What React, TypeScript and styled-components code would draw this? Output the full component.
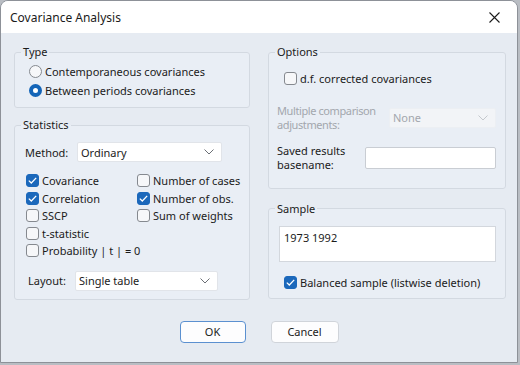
import styled, { createGlobalStyle } from 'styled-components';

const GlobalStyle = createGlobalStyle`
  html, body {
    margin: 0;
    padding: 0;
    background: #b9bdc3;
  }
  body {
    font-family: 'Noto Sans', 'Open Sans', sans-serif;
    font-size: 11px;
    color: #1b1b1b;
  }
`;

function Chevron({ disabled }: { disabled?: boolean }) {
  return (
    <svg width="10" height="6" viewBox="0 0 10 6">
      <path
        d="M0.5 0.5 L5 5 L9.5 0.5"
        fill="none"
        stroke={disabled ? '#c4c8cd' : '#6b6f75'}
        strokeWidth="1"
      />
    </svg>
  );
}

function Check({ checked, label }: { checked?: boolean; label: string }) {
  return (
    <CheckRow>
      <Box $checked={checked}>
        {checked && (
          <svg width="9" height="7" viewBox="0 0 9 7">
            <path d="M0.8 3.6 L3.3 6 L8.2 0.9" fill="none" stroke="#fff" strokeWidth="1.3" />
          </svg>
        )}
      </Box>
      <span>{label}</span>
    </CheckRow>
  );
}

function Radio({ checked, label }: { checked?: boolean; label: string }) {
  return (
    <RadioRow>
      <Circle $checked={checked} />
      <span>{label}</span>
    </RadioRow>
  );
}

export default function App() {
  return (
    <>
      <GlobalStyle />
      <Window>
        <TitleBar>
          <Title>Covariance Analysis</Title>
          <Close>
            <svg width="11" height="11" viewBox="0 0 11 11">
              <path d="M0.5 0.5 L10.5 10.5 M10.5 0.5 L0.5 10.5" stroke="#1b1b1b" strokeWidth="1.1" />
            </svg>
          </Close>
        </TitleBar>

        <Body>
          <Column>
            <Group>
              <Legend>Type</Legend>
              <TypeContent>
                <Radio label="Contemporaneous covariances" />
                <Radio checked label="Between periods covariances" />
              </TypeContent>
            </Group>

            <Group>
              <Legend>Statistics</Legend>
              <StatsContent>
                <FieldRow $indent={10}>
                  <FieldLabel $width={52}>Method:</FieldLabel>
                  <Combo $width={145}>
                    <span>Ordinary</span>
                    <Chevron />
                  </Combo>
                </FieldRow>

                <CheckGrid>
                  <Check checked label="Covariance" />
                  <Check label="Number of cases" />
                  <Check checked label="Correlation" />
                  <Check checked label="Number of obs." />
                  <Check label="SSCP" />
                  <Check label="Sum of weights" />
                  <Check label="t-statistic" />
                  <span />
                  <Check label="Probability | t | = 0" />
                </CheckGrid>

                <FieldRow $indent={13} $top={11}>
                  <FieldLabel $width={47}>Layout:</FieldLabel>
                  <Combo $width={143}>
                    <span>Single table</span>
                    <Chevron />
                  </Combo>
                </FieldRow>
              </StatsContent>
            </Group>
          </Column>

          <Column>
            <Group>
              <Legend>Options</Legend>
              <OptionsContent>
                <Indent>
                  <Check label="d.f. corrected covariances" />
                </Indent>

                <SplitRow $top={16}>
                  <TwoLine $disabled>
                    Multiple comparison
                    <br />
                    adjustments:
                  </TwoLine>
                  <Combo $width={107} $disabled>
                    <span>None</span>
                    <Chevron disabled />
                  </Combo>
                </SplitRow>

                <SplitRow $top={12}>
                  <TwoLine>
                    Saved results
                    <br />
                    basename:
                  </TwoLine>
                  <TextBox />
                </SplitRow>
              </OptionsContent>
            </Group>

            <Group>
              <Legend>Sample</Legend>
              <SampleContent>
                <SampleBox>1973 1992</SampleBox>
                <Indent $left={5}>
                  <Check checked label="Balanced sample (listwise deletion)" />
                </Indent>
              </SampleContent>
            </Group>
          </Column>
        </Body>

        <Footer>
          <Button $primary>OK</Button>
          <Button $width={68}>Cancel</Button>
        </Footer>
      </Window>
    </>
  );
}

const Window = styled.div`
  width: 516px;
  height: 361px;
  border: 1px solid #8d9198;
  border-radius: 8px 8px 0 0;
  background: #e6ebf2;
  overflow: hidden;
  display: flex;
  flex-direction: column;
`;

const TitleBar = styled.div`
  height: 32px;
  background: #ffffff;
  display: flex;
  align-items: center;
  justify-content: space-between;
  padding: 0 17px 0 9px;
`;

const Title = styled.span`
  font-size: 12px;
`;

const Close = styled.span`
  display: flex;
`;

const Body = styled.div`
  display: grid;
  grid-template-columns: 236px 238px;
  column-gap: 18px;
  padding: 11px 0 0 13px;
  align-items: start;
`;

const Column = styled.div`
  display: flex;
  flex-direction: column;
  gap: 9px;

  & + & {
    gap: 12px;
  }
`;

const Group = styled.fieldset`
  margin: 0;
  padding: 0;
  min-width: 0;
  border: 1px solid #d3d9e1;
  border-radius: 3px;
  background: #e9eef5;
`;

const Legend = styled.legend`
  margin-left: 6px;
  padding: 0 2px;
  line-height: 16px;
`;

const TypeContent = styled.div`
  padding: 2px 0 7px 14px;
`;

const RadioRow = styled.div`
  height: 19px;
  display: flex;
  align-items: center;
  gap: 3px;
`;

const Circle = styled.span<{ $checked?: boolean }>`
  box-sizing: border-box;
  flex-shrink: 0;
  width: 13px;
  height: 13px;
  border-radius: 50%;
  border: ${(p) => (p.$checked ? '4px solid #1465b8' : '1px solid #85898f')};
  background: ${(p) => (p.$checked ? '#ffffff' : '#f6f7f9')};
`;

const StatsContent = styled.div`
  padding: 9px 0 8px 0;
`;

const FieldRow = styled.div<{ $indent: number; $top?: number }>`
  display: flex;
  align-items: center;
  padding-left: ${(p) => p.$indent}px;
  margin-top: ${(p) => p.$top ?? 0}px;
`;

const FieldLabel = styled.span<{ $width: number }>`
  width: ${(p) => p.$width}px;
`;

const Combo = styled.div<{ $width: number; $disabled?: boolean }>`
  box-sizing: border-box;
  flex-shrink: 0;
  width: ${(p) => p.$width}px;
  height: 20px;
  display: flex;
  align-items: center;
  justify-content: space-between;
  padding: 0 7px 0 3px;
  background: ${(p) => (p.$disabled ? '#f2f4f7' : '#ffffff')};
  border: 1px solid ${(p) => (p.$disabled ? '#eceff3' : '#e1e4e9')};
  border-radius: 2px;
  color: ${(p) => (p.$disabled ? '#a3a7ad' : '#1b1b1b')};
`;

const CheckGrid = styled.div`
  display: grid;
  grid-template-columns: 111px auto;
  grid-auto-rows: 17.5px;
  margin-top: 10px;
  padding-left: 11px;
`;

const CheckRow = styled.div`
  height: 17.5px;
  display: flex;
  align-items: center;
  gap: 3px;
  white-space: nowrap;
`;

const Box = styled.span<{ $checked?: boolean }>`
  box-sizing: border-box;
  flex-shrink: 0;
  width: 13px;
  height: 13px;
  border-radius: 3px;
  display: flex;
  align-items: center;
  justify-content: center;
  border: 1px solid ${(p) => (p.$checked ? '#1b68bb' : '#85898f')};
  background: ${(p) => (p.$checked ? '#1b68bb' : '#f6f7f9')};
`;

const OptionsContent = styled.div`
  padding: 10px 9px 16px 8px;
`;

const Indent = styled.div<{ $left?: number }>`
  padding-left: ${(p) => p.$left ?? 7}px;
`;

const SplitRow = styled.div<{ $top: number }>`
  display: flex;
  align-items: center;
  justify-content: space-between;
  margin-top: ${(p) => p.$top}px;
`;

const TwoLine = styled.span<{ $disabled?: boolean }>`
  line-height: 14px;
  white-space: nowrap;
  letter-spacing: ${(p) => (p.$disabled ? '-0.4px' : '0')};
  color: ${(p) => (p.$disabled ? '#a3a7ad' : '#1b1b1b')};
`;

const TextBox = styled.div`
  box-sizing: border-box;
  flex-shrink: 0;
  width: 131px;
  height: 22px;
  background: #ffffff;
  border: 1px solid #c9cdd3;
  border-radius: 2px;
`;

const SampleContent = styled.div`
  padding: 9px 9px 7px 10px;
  display: flex;
  flex-direction: column;
  gap: 12px;
`;

const SampleBox = styled.div`
  box-sizing: border-box;
  height: 36px;
  background: #ffffff;
  border: 1px solid #d3d7dd;
  padding: 3px 4px;
`;

const Footer = styled.div`
  display: flex;
  justify-content: center;
  gap: 25px;
  padding-top: 21px;
`;

const Button = styled.button<{ $primary?: boolean; $width?: number }>`
  box-sizing: border-box;
  width: ${(p) => p.$width ?? 66}px;
  height: 22px;
  font-family: inherit;
  font-size: 11px;
  color: #1b1b1b;
  background: #fdfdfe;
  border: 1px solid ${(p) => (p.$primary ? '#5b90d0' : '#d0d4da')};
  border-radius: 4px;
  padding: 0;
`;
